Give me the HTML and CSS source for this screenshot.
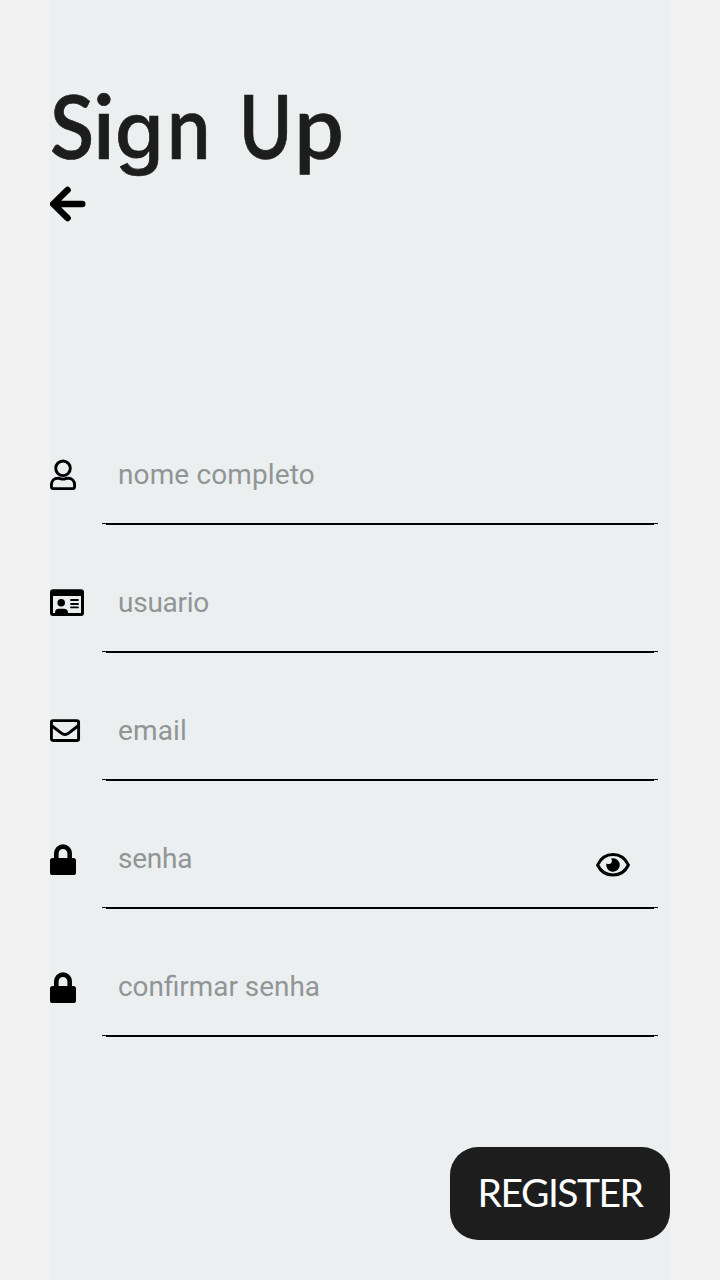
FILE: index.html
```
<!DOCTYPE html>
<html lang="pt">
<head>
<meta charset="utf-8">
<title>Sign Up</title>
<link rel="stylesheet" href="styles.css">
</head>
<body>
<main class="screen">
  <h1 class="title"><span class="cap-s">S</span><span class="low-i">i</span><span class="low-g">g</span><span class="low-n">n</span> <span class="cap-u">U</span>p</h1>
  <svg class="back" width="36" height="36" viewBox="0 0 36 36"><path d="M17.5 4 3.2 18 17.5 32M4 18H32.2" fill="none" stroke="#000" stroke-width="6.6" stroke-linecap="round" stroke-linejoin="round"/></svg>
  <div class="form">
    <div class="row">
      <svg class="icon" width="34" height="34" viewBox="0 0 34 34"><g fill="none" stroke="#000" stroke-width="2.9"><circle cx="13" cy="10.3" r="7.3"/><path d="M1.4 28V27C1.4 22.8 4.2 20.2 8 20.2C10 20.2 10.5 21.1 13 21.1S16 20.2 18 20.2C21.8 20.2 24.6 22.8 24.6 27V28Q24.6 30.6 23.2 30.6H2.8Q1.4 30.6 1.4 28Z"/></g></svg>
      <div class="field"><span class="hint">nome completo</span></div>
    </div>
    <div class="row">
      <svg class="icon" width="34" height="34" viewBox="0 0 34 34"><path fill-rule="evenodd" d="M3 3.3H31Q34 3.3 34 6.3V27Q34 30 31 30H3Q0 30 0 27V6.3Q0 3.3 3 3.3ZM3 10V27H5Q5 22.8 9 22.8H13.5Q18 22.8 18 27H31V10Z"/><circle cx="11.2" cy="16.7" r="3.8"/><path d="M21 14H28M21 18H28M21 21.4H28" stroke="#000" stroke-width="1.8" stroke-linecap="round"/></svg>
      <div class="field"><span class="hint tight">usuario</span></div>
    </div>
    <div class="row">
      <svg class="icon" width="34" height="34" viewBox="0 0 34 34"><g fill="none" stroke="#000" stroke-width="2.9"><rect x="1.4" y="6.6" width="27.2" height="19.9" rx="1.8"/><path d="M1.5 11.5 11 18.8Q15 22 19 18.8L28.5 11.5"/></g></svg>
      <div class="field"><span class="hint">email</span></div>
    </div>
    <div class="row">
      <svg class="icon" width="34" height="34" viewBox="0 0 34 34"><rect y="16" width="26" height="17" rx="2.6"/><path d="M6.3 18V11.3A6.7 6.7 0 0 1 19.7 11.3V18" fill="none" stroke="#000" stroke-width="4.6"/></svg>
      <div class="field"><span class="hint tight">senha</span>
        <svg class="eye" width="34" height="24" viewBox="0 0 34 24"><path d="M1.6 12C8 -2 26 -2 32.4 12C26 25.4 8 25.4 1.6 12Z" fill="none" stroke="#000" stroke-width="3"/><path d="M17 5.2A6.8 6.8 0 1 1 10.4 10.4Q14 12.2 15.5 9.5Q16.4 7.5 15.2 5.5Z"/></svg>
      </div>
    </div>
    <div class="row">
      <svg class="icon" width="34" height="34" viewBox="0 0 34 34"><rect y="16" width="26" height="17" rx="2.6"/><path d="M6.3 18V11.3A6.7 6.7 0 0 1 19.7 11.3V18" fill="none" stroke="#000" stroke-width="4.6"/></svg>
      <div class="field"><span class="hint snug">confirmar senha</span></div>
    </div>
  </div>
  <div class="register"><span class="label">REGISTER</span></div>
</main>
</body>
</html>
```
FILE: styles.css
```
* { box-sizing: border-box; }
body { margin: 0; background: #f1f1f1; font-family: Roboto, sans-serif; }
.screen {
  display: flex;
  flex-direction: column;
  width: 620px;
  height: 1280px;
  margin: 0 auto;
  padding-top: 68px;
  background: #ebeff0;
}
.title {
  margin: 0;
  height: 118px;
  font: 600 88px/114px Lato, sans-serif;
  letter-spacing: 0;
  white-space: nowrap;
  color: #1d1d1d;
  -webkit-text-stroke: 0.7px #1d1d1d;
}
.cap-s, .low-n, .cap-u { display: inline-block; transform-origin: left; }
.cap-s { transform: scaleX(0.92); margin-right: -5px; }
.low-g { font-family: Inter, sans-serif; font-size: 79px; font-weight: 500; line-height: 1; letter-spacing: 3px; }
.low-n { transform: scaleX(0.88); margin-right: -3px; }
.cap-u { transform: scaleX(0.82); margin: 0 -10px 0 4px; }
.back { display: block; }
.form { margin-top: 189px; }
.row { display: flex; height: 128px; }
.icon { flex: none; margin-top: 47px; }
.field {
  display: flex;
  justify-content: space-between;
  width: 556px;
  height: 114px;
  margin-left: 18px;
  padding: 47px 28px 0 16px;
  background:
    linear-gradient(#000, #000) 0 112px / 556px 1px no-repeat,
    linear-gradient(#000, #000) 4px 113px / 548px 1px no-repeat;
}
.hint { font-size: 28px; line-height: 33px; letter-spacing: 0.12px; color: #919595; white-space: nowrap; }
.tight { letter-spacing: -0.25px; }
.snug { font-size: 27.9px; letter-spacing: 0; }
.eye { margin-top: 11px; }
.register {
  display: flex;
  align-items: center;
  justify-content: center;
  align-self: flex-end;
  width: 220px;
  height: 93px;
  margin-top: 96px;
  border-radius: 28px;
  background: #1d1d1d;
}
.label { padding-bottom: 3px; font: 400 39px/46px Lato, sans-serif; letter-spacing: -1.5px; color: #fff; }
```
